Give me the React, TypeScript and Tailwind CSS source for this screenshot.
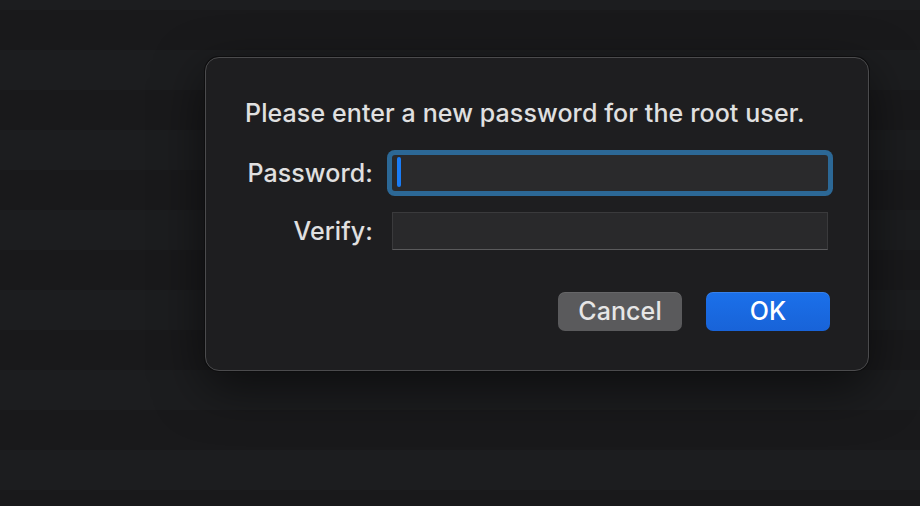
import React, { useState } from 'react';

export default function App() {
  const [password, setPassword] = useState('');
  const [verify, setVerify] = useState('');

  return (
    <div className="h-[506px] w-[920px] overflow-hidden bg-[repeating-linear-gradient(180deg,#1c1d1f_0px,#1c1d1f_10px,#19191b_10px,#19191b_50px,#1c1d1f_50px,#1c1d1f_80px)] pl-[205px] pt-[57px] font-['Inter',sans-serif] font-[450] text-[#e0e0e0]">
      <div className="w-[664px] rounded-[14px] border border-[#4b4b4d] bg-[#1e1e20] px-[39px] pb-[39px] pt-[40px] shadow-[0_0_0_1px_#0e0e0f,0_16px_50px_rgba(0,0,0,0.55)]">
        <p className="text-[25px] leading-[30px] tracking-[0.1px]">Please enter a new password for the root user.</p>

        <div className="mt-[27px] grid grid-cols-[128px_436px] grid-rows-[36px_38px] items-center gap-x-[19px] gap-y-[21px]">
          <label className="text-right text-[25px] leading-[30px] tracking-[0.1px]">Password:</label>
          <div className="relative h-[36px] rounded-[3px] bg-[#2a2a2c] shadow-[0_0_0_5px_#2c6896]">
            <input
              value={password}
              onChange={(event) => setPassword(event.target.value)}
              type="password"
              className="h-full w-full bg-transparent px-[10px] text-[20px] outline-none"
            />
            <span className="pointer-events-none absolute left-[5px] top-[2px] h-[30px] w-[4px] rounded-full bg-[#1a7cf5]" />
          </div>

          <label className="text-right text-[25px] leading-[30px] tracking-[0.1px]">Verify:</label>
          <div className="h-[38px] border border-[#3a3a3c] border-b-[#5a5a5c] bg-[#29292b]">
            <input
              value={verify}
              onChange={(event) => setVerify(event.target.value)}
              type="password"
              className="h-full w-full bg-transparent px-[10px] text-[20px] outline-none"
            />
          </div>
        </div>

        <div className="mt-[42px] flex justify-end gap-[24px]">
          <button className="h-[39px] w-[124px] rounded-[7px] bg-[#5a5a5c] text-[25px] tracking-[0.1px] text-[#e6e6e6] shadow-[inset_0_1px_0_rgba(255,255,255,0.08)]">
            Cancel
          </button>
          <button className="-mr-[1px] h-[39px] w-[124px] rounded-[7px] bg-[linear-gradient(180deg,#1b70ea,#1863d8)] text-[25px] tracking-[0.1px] text-white shadow-[inset_0_1px_0_rgba(255,255,255,0.12)]">
            OK
          </button>
        </div>
      </div>
    </div>
  );
}
